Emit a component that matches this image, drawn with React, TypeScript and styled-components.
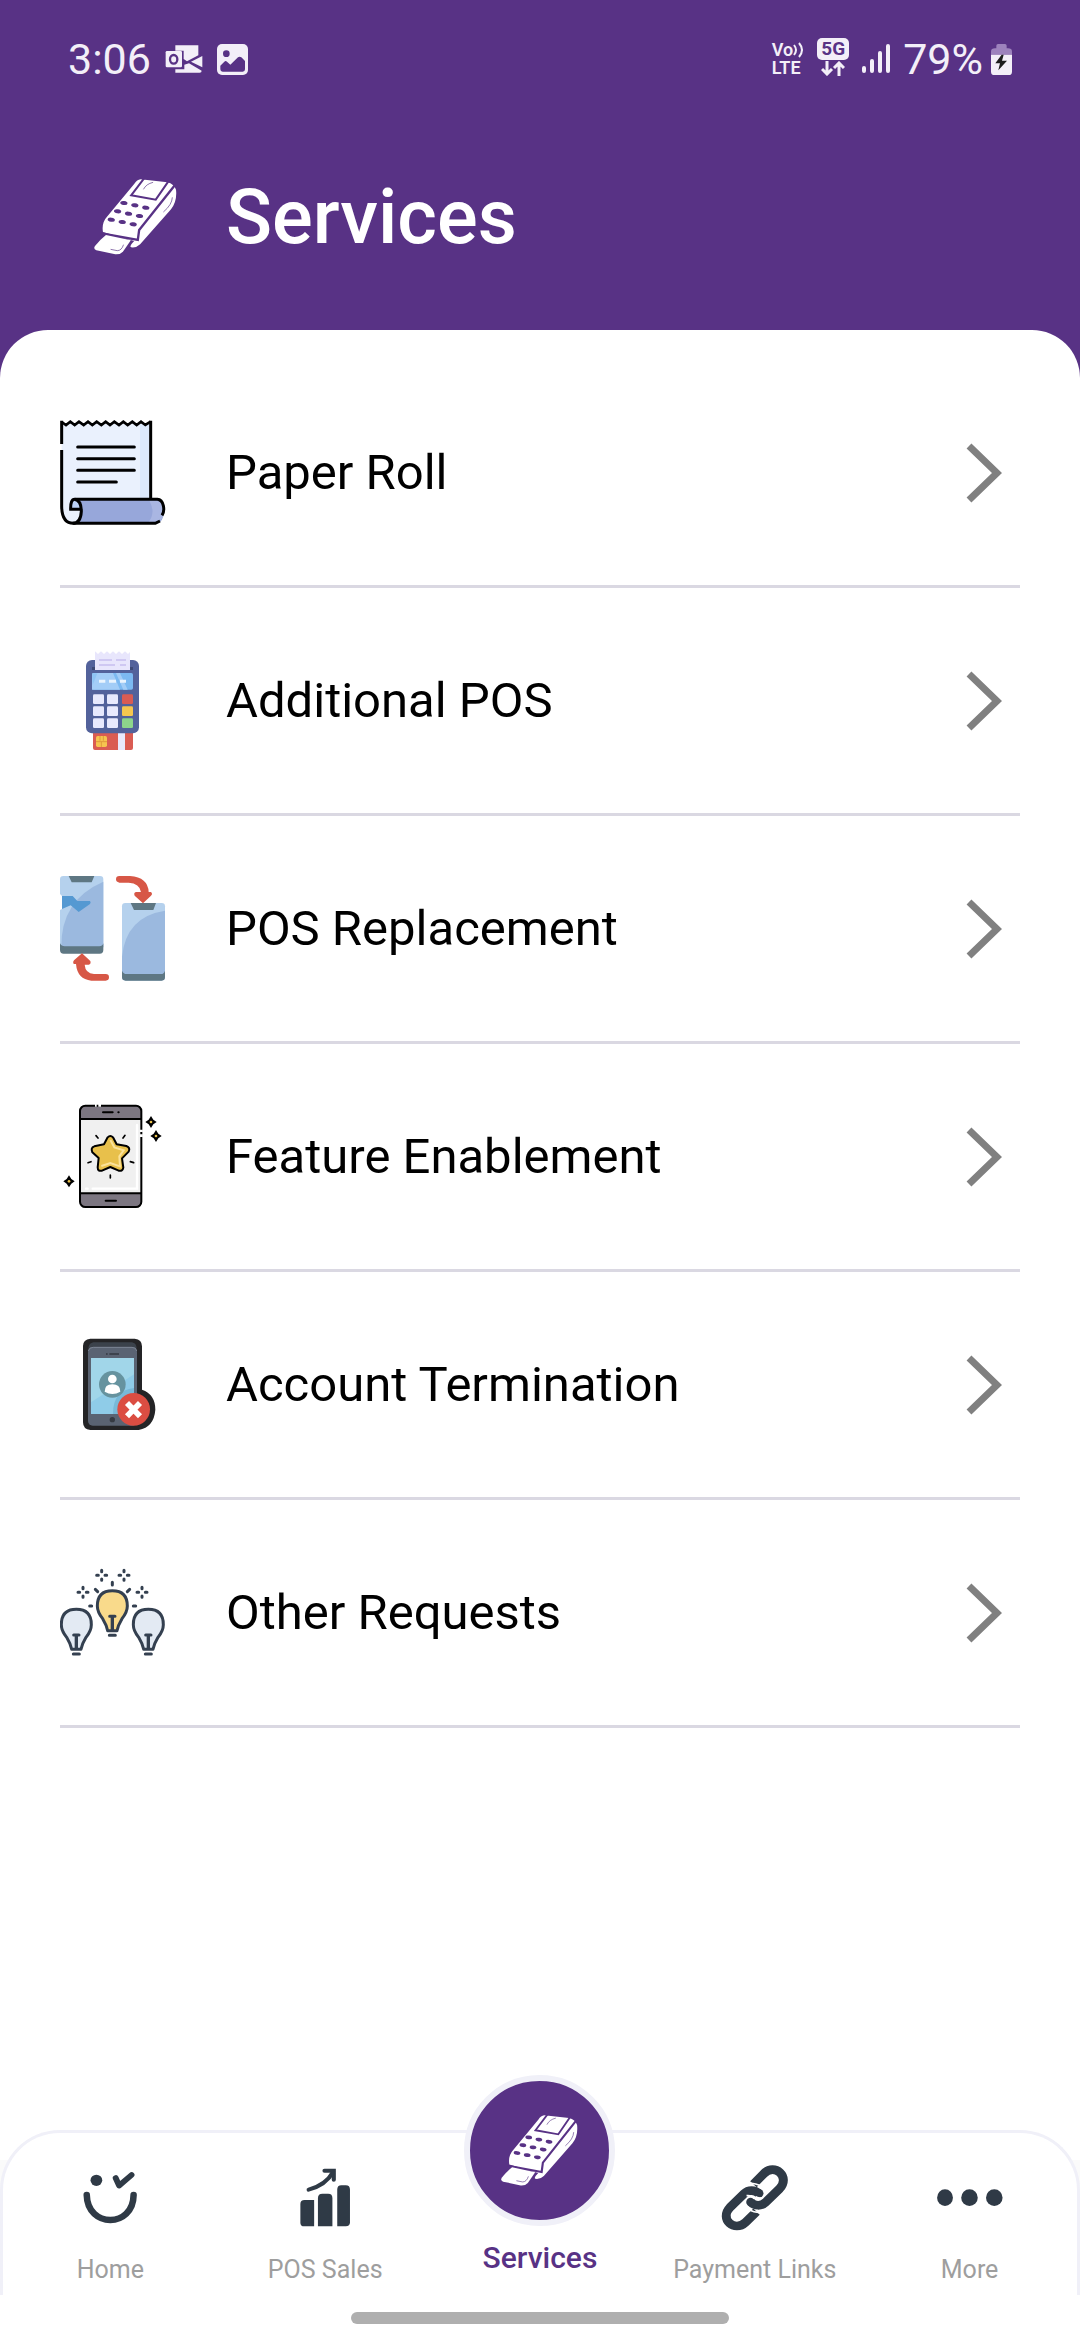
import type { ReactNode } from 'react';
import styled, { createGlobalStyle } from 'styled-components';

const purple = '#583285';
const ink = '#2f3a46';

const GlobalStyle = createGlobalStyle`
  * {
    box-sizing: border-box;
  }
  body {
    margin: 0;
    background: ${purple};
    font-family: Roboto, 'Liberation Sans', sans-serif;
  }
  svg {
    display: block;
    flex-shrink: 0;
  }
`;

const Screen = styled.div`
  display: flex;
  flex-direction: column;
  min-height: 100vh;
`;

const StatusBar = styled.div`
  display: flex;
  justify-content: space-between;
  align-items: center;
  height: 118px;
  padding: 0 68px;
  color: #f3eff8;
`;

const StatusGroup = styled.div<{ $gap: number }>`
  display: flex;
  align-items: center;
  gap: ${({ $gap }) => $gap}px;
`;

const StatusText = styled.span`
  font-size: 43px;
  line-height: 48px;
`;

const VoLte = styled.span`
  display: flex;
  flex-direction: column;
  font-size: 18px;
  font-weight: 600;
  line-height: 18px;
`;

const VoRow = styled.span`
  display: flex;
  align-items: center;
`;

const Network = styled.span`
  display: flex;
  flex-direction: column;
  align-items: center;
  gap: 1px;
  padding-bottom: 4px;
`;

const NetworkBadge = styled.span`
  width: 32px;
  border-radius: 5px;
  background: #f3eff8;
  color: ${purple};
  font-size: 19px;
  font-weight: 700;
  line-height: 22px;
  text-align: center;
`;

const Header = styled.header`
  display: flex;
  align-items: center;
  gap: 60px;
  height: 212px;
  padding: 0 60px 14px;
`;

const HeaderIcon = styled.div`
  display: flex;
  justify-content: center;
  width: 106px;
  padding-left: 44px;
`;

const Title = styled.h1`
  margin: 0;
  color: white;
  font-size: 76px;
  font-weight: 500;
  line-height: 88px;
`;

const Content = styled.main`
  flex: 1;
  padding: 30px 60px 0;
  border-radius: 48px 48px 0 0;
  background: white;
`;

const ServiceList = styled.ul`
  margin: 0;
  padding: 0;
  list-style: none;
`;

const ServiceItem = styled.li`
  border-bottom: 3px solid #dad8e2;
`;

const ServiceButton = styled.button`
  display: flex;
  align-items: center;
  gap: 60px;
  width: 100%;
  height: 225px;
  padding: 0 18px 0 0;
  border: 0;
  background: none;
  color: black;
  font-family: inherit;
  font-size: 49px;
  text-align: left;
  cursor: pointer;
`;

const ServiceName = styled.span`
  flex: 1;
`;

const BottomArea = styled.div`
  background: white;
`;

const TabBarBackdrop = styled.div`
  background: linear-gradient(white 30px, #fafafa 30px);
`;

const TabBar = styled.nav`
  display: grid;
  grid-template-columns: repeat(5, 1fr);
  align-items: start;
  height: 165px;
  border: 3px solid #f0f0f8;
  border-bottom: 0;
  border-radius: 60px 60px 0 0;
  background: white;
`;

const Tab = styled.a`
  display: flex;
  flex-direction: column;
  align-items: center;
  gap: 20px;
  padding-top: 29px;
  color: #9e9e9e;
  font-size: 25px;
  line-height: 32px;
  text-decoration: none;
  white-space: nowrap;
`;

const ActiveTab = styled(Tab)`
  gap: 12px;
  margin-top: -58px;
  padding-top: 0;
  color: ${purple};
  font-size: 30px;
  font-weight: 500;
  line-height: 40px;
`;

const ActiveCircle = styled.span`
  display: flex;
  justify-content: center;
  align-items: center;
  width: 151px;
  height: 151px;
  border: 6px solid #f0f0f8;
  border-radius: 50%;
  background: ${purple};
`;

const GestureArea = styled.div`
  display: flex;
  justify-content: center;
  height: 45px;
  padding-top: 17px;
`;

const GestureHandle = styled.span`
  width: 35%;
  height: 12px;
  border-radius: 6px;
  background: #afafaf;
`;

const TerminalIcon = ({ width, height }: { width: number; height: number }) => (
  <svg width={width} height={height} viewBox="101 93 250 228" preserveAspectRatio="none" aria-hidden="true">
    <path
      fill="white"
      d="M241 94 L322 103 Q342 108 348 125 Q352 160 333 184 L240 289 Q229 300 213 298 Q208 297 214 288 L222 279 L128 252 Q123 224 142 204 L222 108 Q231 95 241 94Z"
    />
    <path fill="none" stroke={purple} strokeWidth="7" d="M345 111 L237 246 L233 276 L124 256" />
    <path fill="none" stroke={purple} strokeWidth="6" d="M252 91 L213 142 L287 155 L325 100" />
    <path fill="none" stroke={purple} strokeWidth="2" d="M250 124 Q258 108 279 103 M337 148 Q336 170 310 192" />
    <path
      fill="white"
      d="M137 261 L212 277 L188 311 Q180 320 165 319 L108 307 Q98 303 104 294 Q118 276 137 261Z"
    />
    <path fill="none" stroke={purple} strokeWidth="2" d="M190 290 Q184 308 171 308 L151 304" />
    {[0, 1, 2].map((row) =>
      [0, 1, 2].map((col) => {
        const cx = 191 - row * 19 + col * 33;
        const cy = 165 + row * 25 + col * 7;
        return (
          <ellipse
            key={`${row}${col}`}
            cx={cx}
            cy={cy}
            rx="11"
            ry="6"
            fill={purple}
            transform={`rotate(8 ${cx} ${cy})`}
          />
        );
      }),
    )}
  </svg>
);

const OutlookIcon = () => (
  <svg width="38" height="30" viewBox="374 73 114 88" aria-hidden="true">
    <path fill="#f3eff8" d="M405 76 H474 V106 L440 124 L430 117 V92 H405Z" />
    <path fill="#f3eff8" d="M486 108 V142 L452 125Z M405 148 H432 V134 L446 130 L484 152 Q484 158 478 158 H405Z" />
    <rect x="376" y="93" width="49" height="49" rx="4" fill="#f3eff8" />
    <ellipse cx="400" cy="118" rx="11" ry="13" fill="none" stroke={purple} strokeWidth="7" />
  </svg>
);

const GalleryIcon = () => (
  <svg width="31" height="31" viewBox="525 72 93 93" aria-hidden="true">
    <rect x="525" y="72" width="93" height="93" rx="15" fill="#f3eff8" />
    <circle cx="553" cy="101" r="10" fill={purple} />
    <path
      fill={purple}
      d="M535 137 L547 125 Q551 121 555 125 L565 134 L588 112 Q593 108 598 112 L609 123 V148 Q609 155 602 155 H542 Q535 155 535 148Z"
    />
  </svg>
);

const VoiceWaves = () => (
  <svg width="11" height="16" viewBox="0 0 11 16" fill="none" stroke="#f3eff8" strokeWidth="2" aria-hidden="true">
    <path d="M1 3 Q5 8 1 13 M6 1 Q12 8 6 15" />
  </svg>
);

const DataArrows = () => (
  <svg width="24" height="15" viewBox="0 0 24 15" fill="none" stroke="#f3eff8" strokeWidth="3" aria-hidden="true">
    <path d="M6 0 V13 M1 8 L6 13 L11 8 M18 15 V2 M13 7 L18 2 L23 7" />
  </svg>
);

const SignalIcon = () => (
  <svg width="28" height="30" viewBox="0 0 28 30" stroke="#f3eff8" strokeWidth="4" strokeLinecap="round" aria-hidden="true">
    <path d="M2 24 V27 M10 17 V27 M18 9 V27 M26 2 V27" />
  </svg>
);

const BatteryIcon = () => (
  <svg width="21" height="31" viewBox="750 69 63 93" aria-hidden="true">
    <path fill="#9d82bd" d="M750 101 V92 Q750 82 762 82 H766 V74 Q766 69 771 69 H792 Q797 69 797 74 V82 H801 Q813 82 813 92 V101Z" />
    <path fill="#f3eff8" d="M750 101 H813 V152 Q813 162 803 162 H760 Q750 162 750 152Z" />
    <path fill="#1d1d1d" d="M782 101 L763 127 H777 L772 148 L798 119 H783 L788 101Z" />
  </svg>
);

const ChevronIcon = () => (
  <svg width="36" height="60" viewBox="0 0 36 60" fill="none" stroke="#808080" strokeWidth="7" aria-hidden="true">
    <path d="M3 3 L31 30 L3 57" />
  </svg>
);

const ServiceIcon = ({ top, children }: { top: number; children: ReactNode }) => (
  <svg width="106" height="106" viewBox={`60 ${top} 318 318`} aria-hidden="true">
    {children}
  </svg>
);

const PaperRollIcon = () => (
  <ServiceIcon top={60}>
    <path fill="#eaf1fd" d="M65 68 L78 72 H332 V300 H118 L110 366 Q66 372 65 325Z" />
    <path fill="#dce9fc" d="M300 72 H332 V298 H300Z" />
    <path fill="#97a7da" d="M100 298 H350 Q371 300 371 334 Q371 368 350 370 H98 Q124 350 124 330Z" />
    <path fill="#a9b6e2" d="M328 302 H350 Q371 305 371 334 Q371 364 350 366 H326 Q348 336 328 302Z" />
    <path fill="#eaf1fd" d="M92 328 H125 Q122 369 95 369 Q80 366 80 340Z" />
    <path fill="#bcd2f7" d="M92 328 Q90 300 106 300 Q120 302 124 328Z" />
    <g fill="none" stroke="black" strokeWidth="9">
      <path strokeWidth="8" d="M65 66 L78 75 L91 65 L104 75 L117 65 L131 75 L144 65 L157 75 L170 65 L184 75 L197 65 L210 75 L223 65 L237 75 L250 65 L263 75 L277 65 L290 75 L303 65 L316 75 L332 65" />
      <path d="M65 62 V132 M65 150 V320 Q66 370 100 370 H346 L360 363 M332 62 V298 M366 346 Q374 334 370 317 Q366 299 352 298 H104 Q91 298 92 328 H124" />
      <path d="M104 298 Q124 302 124 334 Q122 370 98 370" />
      <path strokeLinecap="round" d="M113 141 H283 M113 176 H283 M113 211 H283 M113 246 H229" />
    </g>
  </ServiceIcon>
);

const AdditionalPosIcon = () => (
  <ServiceIcon top={54}>
    <path fill="#da5c53" d="M159 305 H279 V354 Q279 360 273 360 H165 Q159 360 159 354Z" />
    <path fill="#e8e9fd" d="M234 305 H255 V360 H234Z" />
    <rect x="168" y="318" width="33" height="33" rx="5" fill="#f6c44f" />
    <path fill="none" stroke="#e09a3c" strokeWidth="3" d="M168 335 H201 M180 318 V332 M190 318 V332 M184 335 V351" />
    <rect x="138" y="90" width="159" height="220" rx="18" fill="#53629b" />
    <path fill="#3d4975" d="M156 111 H279 V120 H156Z" />
    <path fill="#e8e6fc" d="M165 64 L174 72 L183 64 L192 72 L201 64 L210 72 L219 64 L228 72 L237 64 L246 72 L255 64 L264 72 L270 66 V120 H165Z" />
    <path stroke="#cfc8f2" strokeWidth="6" d="M177 90 H216 M228 90 H258 M177 105 H225 M240 105 H258" />
    <rect x="156" y="129" width="123" height="50" rx="5" fill="#7cb9f1" />
    <path fill="#a3cdf7" d="M161 129 H219 L240 179 H156 V134Z M228 129 H240 L263 179 H250Z" />
    <path fill="#8ec4f4" d="M156 130 H172 L158 165Z" />
    <path stroke="#e9f4fe" strokeWidth="9" d="M177 154 H196 M207 154 H228 M240 154 H258" />
    {[193, 229, 265].map((y, i) => (
      <g key={y}>
        <rect x="159" y={y} width="33" height="29" rx="4" fill="#e8e9fd" />
        <rect x="201" y={y} width="33" height="29" rx="4" fill="#e8e9fd" />
        <rect x="246" y={y} width="33" height="29" rx="4" fill={['#da5c53', '#f6c74f', '#8dd58b'][i]} />
      </g>
    ))}
  </ServiceIcon>
);

const PosReplacementIcon = () => (
  <ServiceIcon top={48}>
    <path fill="#b5d1ed" d="M70 48 H180 Q190 48 190 58 V262 H60 V150 L66 147 V108 L60 102 V58 Q60 48 70 48Z" />
    <path fill="#9bb9df" d="M190 65 V262 H64 Q62 120 190 65Z" />
    <path fill="#5599d2" d="M66 108 H98 L112 123 H150 Q154 127 150 132 L116 156 L92 136 L66 147Z" />
    <path fill="#5e7783" d="M86 48 H163 L155 67 H95Z M60 250 Q64 259 74 259 H178 Q188 259 190 250 V270 Q190 281 179 281 H71 Q60 281 60 270Z" />
    <rect x="246" y="129" width="129" height="233" rx="10" fill="#b5d1ed" />
    <path fill="#9bb9df" d="M375 152 V345 H246 V290 Q258 170 375 152Z" />
    <path fill="#5e7783" d="M272 129 H348 L340 150 H282Z M246 332 Q250 342 260 342 H363 Q372 342 375 332 V352 Q375 362 365 362 H257 Q246 362 246 352Z" />
    <path
      fill="#d75746"
      d="M238 48 H270 Q324 52 326 96 H333 Q339 102 333 107 L309 130 L284 107 Q280 98 288 96 H303 Q299 70 266 68 H238 Q228 66 228 58 Q228 48 238 48Z"
    />
    <path
      fill="#d75746"
      d="M197 362 H154 Q112 358 108 312 H101 Q97 306 102 301 L126 280 L151 303 Q154 312 146 314 H134 Q136 340 162 342 H197 Q207 342 207 352 Q207 362 197 362Z"
    />
  </ServiceIcon>
);

const Sparkle = ({ x, y }: { x: number; y: number }) => (
  <g>
    <path
      fill="black"
      d={`M${x} ${y - 18} L${x + 7} ${y - 7} L${x + 17} ${y} L${x + 7} ${y + 7} L${x} ${y + 18} L${x - 7} ${y + 7} L${x - 17} ${y} L${x - 7} ${y - 7}Z`}
    />
    <circle cx={x} cy={y} r="4" fill="#e8c04b" />
  </g>
);

const FeatureIcon = () => (
  <ServiceIcon top={57}>
    <rect x="120" y="62" width="184" height="304" rx="16" fill="#7c7681" />
    <path fill="#f0f0f0" d="M120 102 H304 V325 H120Z" />
    <path fill="none" stroke="white" strokeWidth="7" strokeLinecap="round" d="M291 120 V311 H158 M138 311 H143" />
    <rect x="120" y="62" width="184" height="304" rx="16" fill="none" stroke="black" strokeWidth="6" />
    <path stroke="black" strokeWidth="6" d="M120 102 H304 M120 325 H304" />
    <path stroke="black" strokeWidth="6" strokeLinecap="round" d="M189 82 H218 M235 82 H236 M197 347 H228" />
    <path stroke="white" strokeWidth="9" d="M165 61 H170 M175 61 H183 M304 134 V141 M304 148 V156" />
    <path
      fill="#e8c04b"
      stroke="black"
      strokeWidth="6"
      strokeLinejoin="round"
      d="M203 157 Q211 149 219 157 L230 178 L259 183 Q272 188 266 200 L246 220 L250 248 Q248 260 236 257 L211 246 L186 257 Q173 260 173 247 L176 219 L157 202 Q151 188 163 184 L192 178Z"
    />
    <path fill="none" stroke="#fbe29a" strokeWidth="6" d="M211 165 L223 187 L251 196 L238 214 L240 244 L211 234 L184 243" />
    <path stroke="black" strokeWidth="5" strokeLinecap="round" d="M168 152 L174 159 M255 151 L249 159 M144 233 L153 230 M271 230 L281 233 M211 270 V279" />
    <Sparkle x={333} y={111} />
    <Sparkle x={348} y={153} />
    <Sparkle x={87} y={289} />
  </ServiceIcon>
);

const TerminationIcon = () => (
  <ServiceIcon top={51}>
    <path
      fill="#242426"
      d="M151 71 H284 Q306 73 306 94 V224 Q346 238 346 284 Q342 336 296 345 H151 Q129 343 129 322 V93 Q129 73 151 71Z"
    />
    <path fill="#3b424b" d="M160 82 H276 Q289 84 290 100 H145 Q147 84 160 82Z" />
    <rect x="144" y="96" width="147" height="236" rx="14" fill="#5a6372" />
    <path fill="none" stroke="#7c8594" strokeWidth="3" d="M145 108 Q147 97 160 97 H276 Q289 97 290 108" />
    <path stroke="#353a42" strokeWidth="5" d="M198 117 H203 M208 117 H237" />
    <rect x="153" y="129" width="129" height="168" fill="#a1d6e9" />
    <path fill="#8fcce8" d="M153 262 L282 178 V297 H153Z" />
    <circle cx="217" cy="314" r="8" fill="#353a42" />
    <path fill="#78b9d8" d="M282 219 Q218 226 219 297 H282Z" />
    <circle cx="217" cy="208" r="40" fill="#66939f" />
    <circle cx="217" cy="192" r="13" fill="white" />
    <path fill="white" d="M194 230 Q194 208 217 208 Q241 208 241 230 Q217 244 194 230Z" />
    <circle cx="281" cy="283" r="49" fill="#db4d42" />
    <path stroke="white" strokeWidth="17" d="M261 264 L300 304 M300 264 L261 304" />
  </ServiceIcon>
);

const Bulb = ({ x, y, fill }: { x: number; y: number; fill: string }) => (
  <g transform={`translate(${x} ${y})`} fill="none" stroke="#344050" strokeWidth="9">
    <path
      fill={fill}
      strokeLinejoin="round"
      d="M-14 124 Q-17 108 -29 88 Q-45 68 -45 50 Q-45 4 0 4 Q45 4 45 50 Q45 68 29 88 Q17 108 14 124Z"
    />
    <path d="M0 80 V122" strokeWidth="10" />
    <path d="M-8 81 H8 M-9 138 H9" strokeLinecap="round" />
  </g>
);

const Twinkle = ({ x, y }: { x: number; y: number }) => (
  <path
    d={`M${x} ${y - 15} V${y - 11} M${x} ${y + 11} V${y + 15} M${x - 15} ${y} H${x - 10} M${x + 10} ${y} H${x + 15}`}
  />
);

const OtherIcon = () => (
  <ServiceIcon top={45}>
    <Bulb x={109} y={189} fill="#e3eaf3" />
    <Bulb x={325} y={189} fill="#e3eaf3" />
    <Bulb x={217} y={133} fill="#f9da8b" />
    <g stroke="#344050" strokeWidth="9" strokeLinecap="round">
      <Twinkle x={185} y={91} />
      <Twinkle x={252} y={91} />
      <Twinkle x={129} y={142} />
      <Twinkle x={306} y={142} />
      <path d="M217 112 V120 M166 133 L173 140 M269 133 L262 140 M149 183 H155 M280 183 H287" />
    </g>
  </ServiceIcon>
);

const TabIcon = ({ left, children }: { left: number; children: ReactNode }) => (
  <svg
    width="72"
    height="72"
    viewBox={`${left} 305 209 216`}
    preserveAspectRatio="none"
    fill={ink}
    stroke={ink}
    aria-hidden="true"
  >
    {children}
  </svg>
);

const HomeIcon = () => (
  <TabIcon left={216}>
    <circle cx="281" cy="360" r="17" stroke="none" />
    <path fill="none" strokeWidth="17" strokeLinecap="round" strokeLinejoin="round" d="M337 353 L347 376 L383 344" />
    <path fill="none" strokeWidth="19" strokeLinecap="round" d="M253 404 C255 504 388 504 389 404" />
  </TabIcon>
);

const SalesIcon = () => (
  <TabIcon left={839}>
    <g stroke="none">
      <path d="M884 419 H912 V498 H883 Q872 498 872 487 V431 Q872 419 884 419Z" />
      <path d="M936 400 H953 Q965 400 965 413 V498 H923 V413 Q923 400 936 400Z" />
      <path d="M991 375 H1004 Q1016 375 1016 388 V486 Q1016 498 1004 498 H979 V388 Q979 375 991 375Z" />
    </g>
    <path fill="none" strokeWidth="12" strokeLinecap="round" d="M896 388 Q946 374 967 335" />
    <path fill="none" strokeWidth="12" strokeLinecap="round" d="M942 331 H969 V358" />
  </TabIcon>
);

const LinkIcon = () => (
  <TabIcon left={520}>
    <g fill="none" strokeWidth="26">
      <path d="M620 372 L650 340 C682 306 728 350 696 385 L655 426 C643 438 623 438 612 425" />
      <path d="M629 454 L597 486 C565 517 520 476 552 441 L593 400 C605 388 624 388 636 400" />
    </g>
    <circle cx="612" cy="425" r="13" stroke="none" />
    <circle cx="636" cy="399" r="13" stroke="none" />
    <path fill="none" stroke="white" strokeWidth="5" d="M600 368 Q630 368 646 380 M600 406 Q614 404 623 415 M626 409 Q633 415 648 412 M607 448 Q624 459 650 456" />
  </TabIcon>
);

const MoreIcon = () => (
  <TabIcon left={1144}>
    <g stroke="none">
      <ellipse cx="1176" cy="412" rx="23" ry="25" />
      <ellipse cx="1247" cy="412" rx="24" ry="25" />
      <ellipse cx="1319" cy="412" rx="24" ry="25" />
    </g>
  </TabIcon>
);

const services = [
  { name: 'Paper Roll', icon: <PaperRollIcon /> },
  { name: 'Additional POS', icon: <AdditionalPosIcon /> },
  { name: 'POS Replacement', icon: <PosReplacementIcon /> },
  { name: 'Feature Enablement', icon: <FeatureIcon /> },
  { name: 'Account Termination', icon: <TerminationIcon /> },
  { name: 'Other Requests', icon: <OtherIcon /> },
];

const App = () => {
  return (
    <Screen>
      <GlobalStyle />
      <StatusBar>
        <StatusGroup $gap={14}>
          <StatusText>3:06</StatusText>
          <OutlookIcon />
          <GalleryIcon />
        </StatusGroup>
        <StatusGroup $gap={13}>
          <VoLte>
            <VoRow>
              Vo
              <VoiceWaves />
            </VoRow>
            <span>LTE</span>
          </VoLte>
          <Network>
            <NetworkBadge>5G</NetworkBadge>
            <DataArrows />
          </Network>
          <SignalIcon />
          <StatusGroup $gap={8}>
            <StatusText>79%</StatusText>
            <BatteryIcon />
          </StatusGroup>
        </StatusGroup>
      </StatusBar>
      <Header>
        <HeaderIcon>
          <TerminalIcon width={83} height={76} />
        </HeaderIcon>
        <Title>Services</Title>
      </Header>
      <Content>
        <ServiceList>
          {services.map(({ name, icon }) => (
            <ServiceItem key={name}>
              <ServiceButton type="button">
                {icon}
                <ServiceName>{name}</ServiceName>
                <ChevronIcon />
              </ServiceButton>
            </ServiceItem>
          ))}
        </ServiceList>
      </Content>
      <BottomArea>
        <TabBarBackdrop>
          <TabBar>
            <Tab href="#home">
              <HomeIcon />
              Home
            </Tab>
            <Tab href="#sales">
              <SalesIcon />
              POS Sales
            </Tab>
            <ActiveTab href="#services" aria-current="page">
              <ActiveCircle>
                <TerminalIcon width={77} height={71} />
              </ActiveCircle>
              Services
            </ActiveTab>
            <Tab href="#links">
              <LinkIcon />
              Payment Links
            </Tab>
            <Tab href="#more">
              <MoreIcon />
              More
            </Tab>
          </TabBar>
        </TabBarBackdrop>
        <GestureArea>
          <GestureHandle />
        </GestureArea>
      </BottomArea>
    </Screen>
  );
};

export default App;
